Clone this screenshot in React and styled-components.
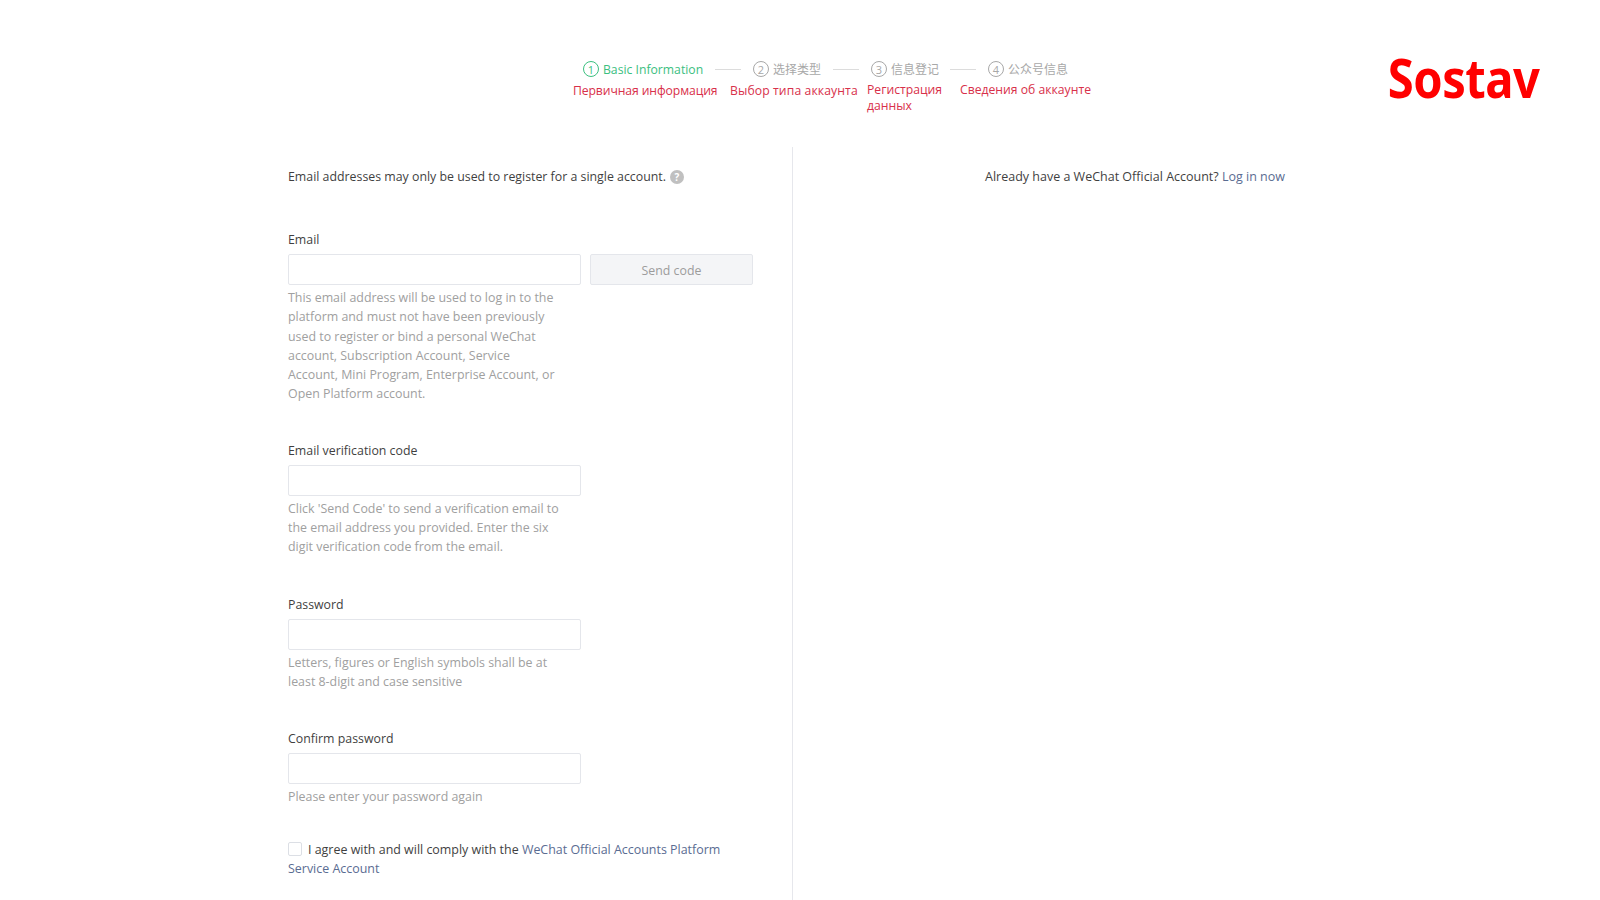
import React from "react";
import styled, { createGlobalStyle } from "styled-components";

const Global = createGlobalStyle`
  html, body { margin: 0; padding: 0; background: #fff; height: 100%; overflow: hidden; }
  body { font-family: "Open Sans", "Noto Sans CJK SC", sans-serif; }
  * { box-sizing: border-box; }
`;
const Page = styled.div`width: 1600px; height: 900px; overflow: hidden; display: flex; flex-direction: column;`;
const Header = styled.header`height: 147px; display: flex; justify-content: space-between; padding: 59px 61px 0 573px;`;
const Stepper = styled.div`display: flex; flex-direction: column;`;
const StepRow = styled.div`display: flex; align-items: center; height: 20px; padding-left: 10px;`;
const Step = styled.div`
  display: flex; align-items: center; gap: 4px; font-size: ${p => (p.$active ? 12.2 : 12)}px; color: ${p => (p.$active ? "#3cc07f" : "#a8a8a8")};
  white-space: nowrap; width: ${p => p.$w}px; flex: none;
`;
const Circle = styled.span`
  width: 16px; height: 16px; border-radius: 50%; border: 1.5px solid ${p => (p.$active ? "#3cc07f" : "#a8a8a8")};
  display: flex; align-items: center; justify-content: center; font-size: 11px; line-height: 1; flex: none;
`;
const Dash = styled.span`width: 26px; height: 1px; background: #dcdcdc; flex: none; margin-right: 12px;`;
const RedRow = styled.div`display: flex; margin-top: 4px;`;
const Red = styled.div`
  color: #d8304a; font-size: 12.2px; line-height: 16px; width: ${p => p.$w}px; flex: none;
  letter-spacing: ${p => p.$track}px; margin-top: ${p => (p.$up ? -1 : 0)}px;
`;
const Logo = styled.div`
  color: #ff0000; font-family: "Noto Sans", sans-serif; font-weight: 700; font-size: 53px; line-height: 40px;
  letter-spacing: -0.6px; transform: scaleX(.89); transform-origin: right; margin-top: -1px;
`;
const Body = styled.main`flex: 1; display: grid; grid-template-columns: 505px 1fr; margin-left: 288px;`;
const Left = styled.section`border-right: 1px solid #e6e7ec; padding-top: 20px; min-height: 0;`;
const Right = styled.section`padding-top: 20px; padding-left: 192px; font-size: 12.5px; line-height: 19px; color: #3f3f3f;`;
const Note = styled.div`display: flex; align-items: center; gap: 4px; font-size: 12.35px; line-height: 19px; color: #3f3f3f; margin-bottom: 44px;`;
const Help = styled.span`
  width: 14px; height: 14px; border-radius: 50%; background: #c0c0c0; color: #fff; font-size: 10px; font-weight: 700;
  display: flex; align-items: center; justify-content: center; line-height: 1;
`;
const Field = styled.div`margin-bottom: ${p => p.$gap}px;`;
const Label = styled.div`font-size: 12.35px; line-height: 19px; color: #3f3f3f; margin-bottom: 5px;`;
const InputRow = styled.div`display: flex; gap: 9px;`;
const Input = styled.input`display: block; width: 293px; height: 31px; border: 1px solid #e4e6eb; border-radius: 2px; background: #fff; padding: 0 8px; outline: none;`;
const SendBtn = styled.button`
  width: 163px; height: 31px; border: 1px solid #e4e6eb; border-radius: 2px; background: #f4f5f7; color: #9c9c9c;
  font: inherit; font-size: 12.35px; padding: 1px 0 0;
`;
const Hint = styled.div`width: 272px; font-size: 12.4px; line-height: 19.3px; color: #a0a0a0; margin-top: 3px;`;
const Agree = styled.div`font-size: 12.45px; line-height: 19.3px; color: #3f3f3f;`;
const AgreeLine = styled.div`display: flex; align-items: center; white-space: pre;`;
const Check = styled.span`
  width: 14px; height: 14px; border: 1px solid #dcdfe5; border-radius: 2px; margin-right: 6px; flex: none;
`;
const Link = styled.a`color: #5a6c92; text-decoration: none;`;

const steps = [
  { n: "1", t: "Basic Information", w: 132, active: true },
  { n: "2", t: "选择类型", w: 80 },
  { n: "3", t: "信息登记", w: 79 },
  { n: "4", t: "公众号信息", w: 80 },
];
const reds = [
  { t: "Первичная информация", w: 157, track: -0.1 },
  { t: "Выбор типа аккаунта", w: 137, track: 0.1 },
  { t: "Регистрация данных", w: 93, up: true, track: 0 },
  { t: "Сведения об аккаунте", w: 140, up: true, track: 0 },
];

export default function App() {
  return (
    <Page>
      <Global />
      <Header>
        <Stepper>
          <StepRow>
            {steps.map((s, i) => (
              <React.Fragment key={s.n}>
                <Step $active={s.active} $w={s.w}>
                  <Circle $active={s.active}>{s.n}</Circle>
                  {s.t}
                </Step>
                {i < 3 && <Dash />}
              </React.Fragment>
            ))}
          </StepRow>
          <RedRow>
            {reds.map(r => <Red key={r.t} $w={r.w} $up={r.up} $track={r.track}>{r.t}</Red>)}
          </RedRow>
        </Stepper>
        <Logo>Sostav</Logo>
      </Header>
      <Body>
        <Left>
          <Note>Email addresses may only be used to register for a single account.<Help>?</Help></Note>
          <Field $gap={37}>
            <Label>Email</Label>
            <InputRow><Input /><SendBtn>Send code</SendBtn></InputRow>
            <Hint>This email address will be used to log in to the platform and must not have been previously used to register or bind a personal WeChat account, Subscription Account, Service Account, Mini Program, Enterprise Account, or Open Platform account.</Hint>
          </Field>
          <Field $gap={38}>
            <Label>Email verification code</Label>
            <Input />
            <Hint>Click 'Send Code' to send a verification email to the email address you provided. Enter the six digit verification code from the email.</Hint>
          </Field>
          <Field $gap={38}>
            <Label>Password</Label>
            <Input />
            <Hint>Letters, figures or English symbols shall be at least 8-digit and case sensitive</Hint>
          </Field>
          <Field $gap={33}>
            <Label>Confirm password</Label>
            <Input />
            <Hint>Please enter your password again</Hint>
          </Field>
          <Agree>
            <AgreeLine><Check />I agree with and will comply with the <Link>WeChat Official Accounts Platform</Link></AgreeLine>
            <AgreeLine><Link>Service Account</Link></AgreeLine>
          </Agree>
        </Left>
        <Right>Already have a WeChat Official Account? <Link>Log in now</Link></Right>
      </Body>
    </Page>
  );
}
